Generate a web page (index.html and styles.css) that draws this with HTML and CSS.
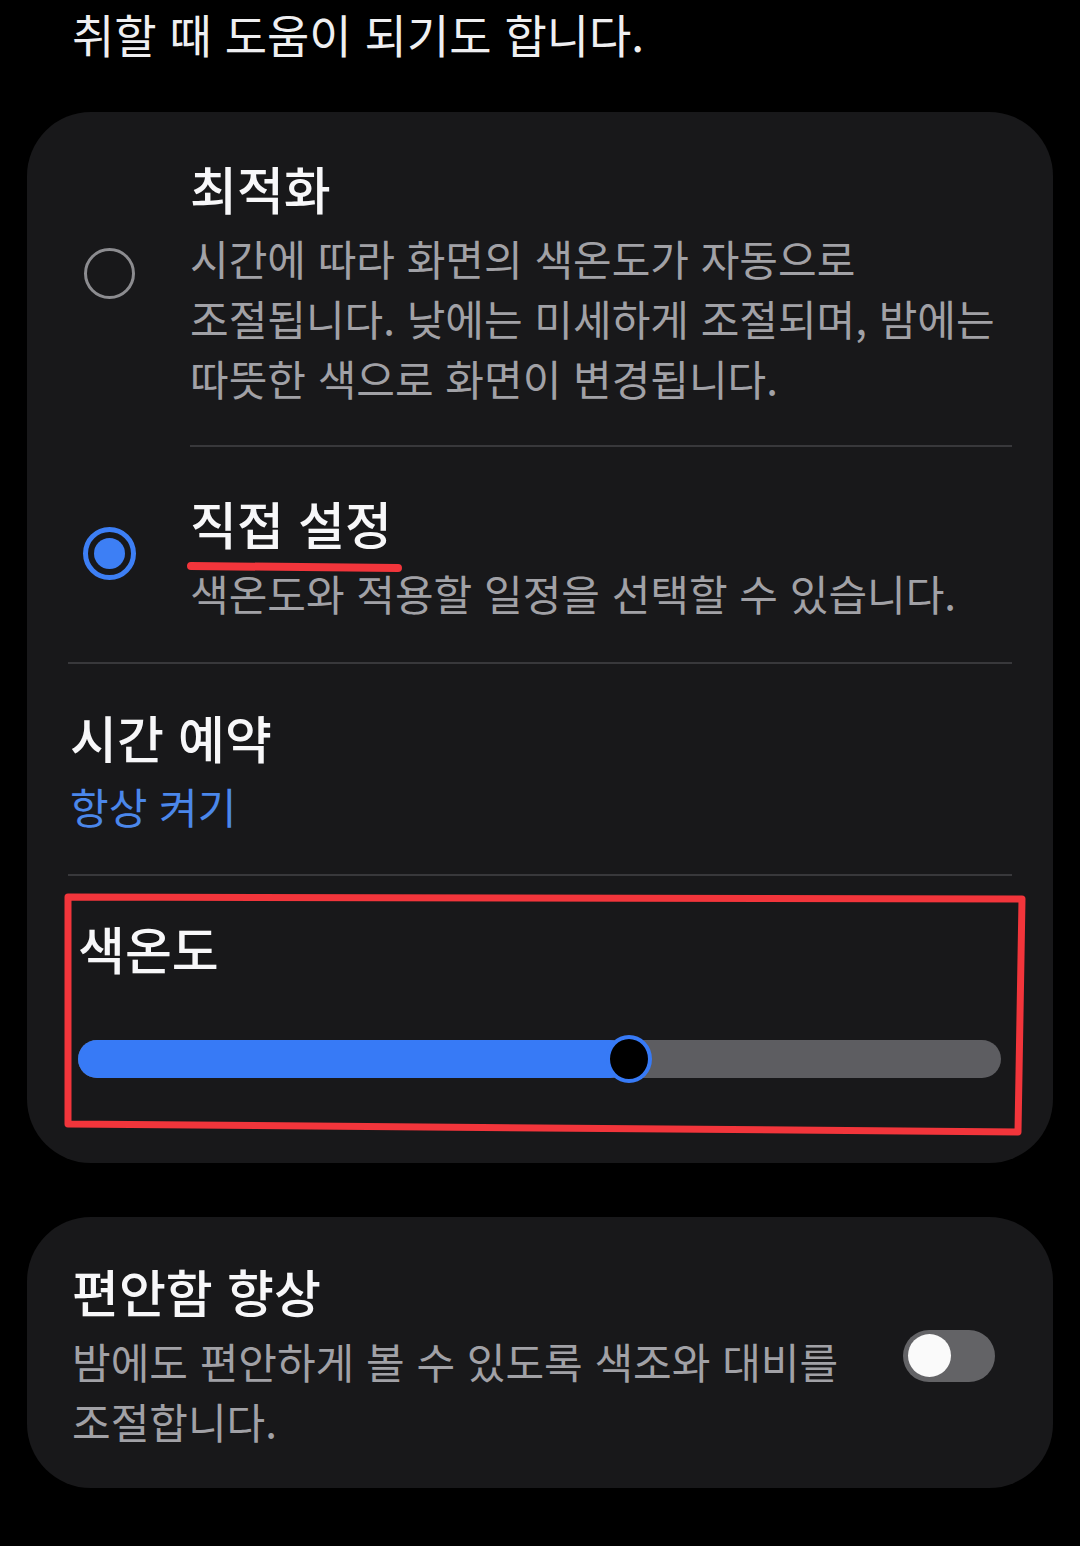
FILE: index.html
```html
<!DOCTYPE html>
<html lang="ko">
<head>
    <meta charset="UTF-8">
    <meta name="viewport" content="width=device-width, initial-scale=1.0">
    <title>화면 모드 - 눈 보호 모드</title>
    <link rel="stylesheet" href="styles.css">
</head>
<body>
    <p class="intro">취할 때 도움이 되기도 합니다.</p>

    <div class="card">
        <div class="option">
            <span class="radio"></span>
            <div class="option-text first">
                <div class="title">최적화</div>
                <div class="desc">시간에 따라 화면의 색온도가 자동으로 조절됩니다. 낮에는 미세하게 조절되며, 밤에는 따뜻한 색으로 화면이 변경됩니다.</div>
            </div>
        </div>

        <div class="option divided">
            <span class="radio checked"></span>
            <div class="option-text">
                <div class="title">직접 설정</div>
                <div class="desc">색온도와 적용할 일정을 선택할 수 있습니다.</div>
            </div>
        </div>

        <div class="row divided">
            <div class="title">시간 예약</div>
            <div class="sub">항상 켜기</div>
        </div>

        <div class="row slider-row">
            <div class="title">색온도</div>
            <div class="slider">
                <div class="slider-fill" style="width: 59.7%"></div>
                <span class="slider-thumb" style="left: 59.7%"></span>
            </div>
        </div>
    </div>

    <div class="card card-small">
        <div class="toggle-row">
            <div class="toggle-text">
                <div class="title">편안함 향상</div>
                <div class="desc">밤에도 편안하게 볼 수 있도록 색조와 대비를 조절합니다.</div>
            </div>
            <span class="switch"><span class="knob"></span></span>
        </div>
    </div>

    <!-- 빨간 표시 (주석) -->
    <svg class="marks" width="1080" height="1546" viewBox="0 0 1080 1546">
        <path d="M191 566 L398 568" stroke="#f2353b" stroke-width="8" stroke-linecap="round" fill="none"/>
        <path d="M68 897 L1022 899 L1018 1132 L68 1124 Z" stroke="#f2353b" stroke-width="7" stroke-linejoin="round" fill="none"/>
    </svg>
</body>
</html>
```

FILE: styles.css
```css
body {
    margin: 0;
    background: #000;
    font-family: "Noto Sans CJK KR", "Noto Sans", sans-serif;
    color: #f5f5f7;
    width: 1080px;
    height: 1546px;
    position: relative;
    overflow: hidden;
    word-break: keep-all;
}
.intro {
    margin: 0;
    padding: 3px 0 0 72px;
    font-size: 46px;
    line-height: 60px;
    color: #efeff1;
}
.card {
    margin: 49px 27px 0;
    background: #18181a;
    border-radius: 64px;
    padding: 0 41px;
    box-sizing: border-box;
    width: 1026px;
}
.title {
    font-size: 51px;
    line-height: 60px;
    font-weight: 500;
    color: #f7f7f9;
}
.desc {
    margin-top: 10px;
    font-size: 42px;
    line-height: 60px;
    color: #a1a1a6;
}
.sub {
    margin-top: 9px;
    font-size: 42px;
    line-height: 60px;
    color: #4b87ea;
}

/* 라디오 옵션 */
.option {
    display: flex;
    align-items: center;
}
.option.divided {
    border-bottom: 2px solid #38383b;
    padding: 46px 0 39px;
}
.radio {
    flex: none;
    width: 51px;
    height: 51px;
    box-sizing: border-box;
    border-radius: 50%;
    border: 3px solid #8c8c90;
    margin: 0 55px 12px 16px;
    position: relative;
}
.radio.checked {
    width: 53px;
    height: 53px;
    border: 5px solid #3d7ff5;
    margin: 0 54px 10px 15px;
}
.radio.checked::after {
    content: "";
    position: absolute;
    left: 6px;
    top: 6px;
    width: 31px;
    height: 31px;
    border-radius: 50%;
    background: #3d7ff5;
}
.option-text {
    flex: 1;
}
.option-text.first {
    padding: 46px 0 37px;
    border-bottom: 2px solid #38383b;
}

/* 일반 행 */
.row.divided {
    padding: 43px 0 38px 2px;
    border-bottom: 2px solid #38383b;
}
.slider-row {
    padding: 42px 11px 85px 10px;
}
.slider {
    position: relative;
    height: 38px;
    margin-top: 62px;
    border-radius: 19px;
    background: #5d5d61;
}
.slider-fill {
    height: 100%;
    border-radius: 19px;
    background: #377af6;
}
.slider-thumb {
    position: absolute;
    top: 50%;
    width: 46px;
    height: 48px;
    box-sizing: border-box;
    border-radius: 50%;
    background: #000;
    border: 4px solid #377af6;
    transform: translate(-50%, -50%);
}

/* 두 번째 카드 */
.card-small {
    margin-top: 54px;
    padding: 44px 58px 37px 45px;
}
.toggle-row {
    display: flex;
    align-items: center;
    gap: 33px;
}
.toggle-text {
    flex: 1;
}
.switch {
    flex: none;
    width: 92px;
    height: 52px;
    border-radius: 26px;
    background: #636366;
    position: relative;
}
.knob {
    position: absolute;
    left: 5px;
    top: 4px;
    width: 43px;
    height: 43px;
    border-radius: 50%;
    background: #fafafa;
}

.marks {
    position: absolute;
    left: 0;
    top: 0;
    pointer-events: none;
}
```
